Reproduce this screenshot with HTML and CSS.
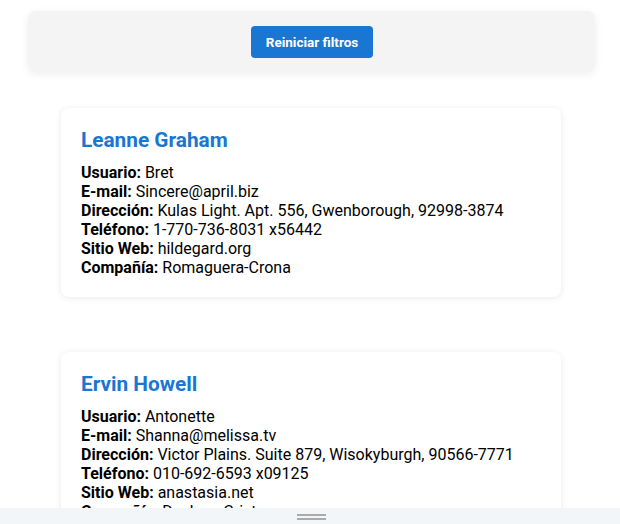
FILE: index.html
```html
<!DOCTYPE html>
<html lang="es">
<head>
<meta charset="utf-8">
<link rel="stylesheet" href="styles.css">
</head>
<body>
<div class="filters">
  <button class="reset">Reiniciar filtros</button>
</div>
<div class="list">
  <div class="card">
    <h2>Leanne Graham</h2>
    <p><b>Usuario:</b> Bret</p>
    <p><b>E-mail:</b> Sincere@april.biz</p>
    <p><b>Dirección:</b> Kulas Light. Apt. 556, Gwenborough, 92998-3874</p>
    <p><b>Teléfono:</b> 1-770-736-8031 x56442</p>
    <p><b>Sitio Web:</b> hildegard.org</p>
    <p><b>Compañía:</b> Romaguera-Crona</p>
  </div>
  <div class="card">
    <h2>Ervin Howell</h2>
    <p><b>Usuario:</b> Antonette</p>
    <p><b>E-mail:</b> Shanna@melissa.tv</p>
    <p><b>Dirección:</b> Victor Plains. Suite 879, Wisokyburgh, 90566-7771</p>
    <p><b>Teléfono:</b> 010-692-6593 x09125</p>
    <p><b>Sitio Web:</b> anastasia.net</p>
    <p><b>Compañía:</b> Deckow-Crist</p>
  </div>
</div>
<div class="handlebar"><span class="handle"></span></div>
</body>
</html>
```
FILE: styles.css
```css
html, body {
  margin: 0;
  padding: 0;
  background: #fff;
  font-family: Roboto, "Liberation Sans", sans-serif;
  color: #000;
}
.filters {
  margin: 11px 0 0 28px;
  width: 567px;
  box-sizing: border-box;
  height: 61px;
  padding: 15px 0 14px;
  background: #f4f4f4;
  border-radius: 8px;
  box-shadow: 0 2px 8px rgba(0,0,0,0.07);
  display: flex;
  justify-content: center;
  align-items: flex-start;
}
.reset {
  width: 122px;
  height: 32px;
  border: none;
  border-radius: 4px;
  background: #1976d2;
  color: #fff;
  font-family: Roboto, sans-serif;
  font-weight: 700;
  font-size: 13.5px;
  padding: 0;
  margin-left: 1px;
}
.list {
  margin: 36px 0 0 61px;
  width: 500px;
  display: flex;
  flex-direction: column;
  gap: 55px;
}
.card {
  background: #fff;
  border-radius: 8px;
  box-shadow: 0 1px 7px rgba(0,0,0,0.09);
  padding: 20px 20px 20px;
}
.card h2 {
  margin: 0 0 11px;
  font-size: 20.8px;
  font-weight: 700;
  color: #1976d2;
}
.card p {
  margin: 0;
  font-size: 16px;
}
.handlebar {
  position: fixed;
  left: 0;
  right: 0;
  bottom: 0;
  height: 16px;
  background: #f3f6f9;
  display: flex;
  justify-content: center;
}
.handle {
  margin-top: 6px;
  margin-left: 2px;
  width: 29px;
  height: 6px;
  box-sizing: border-box;
  border-top: 2px solid #aaa;
  border-bottom: 2px solid #aaa;
}
```
